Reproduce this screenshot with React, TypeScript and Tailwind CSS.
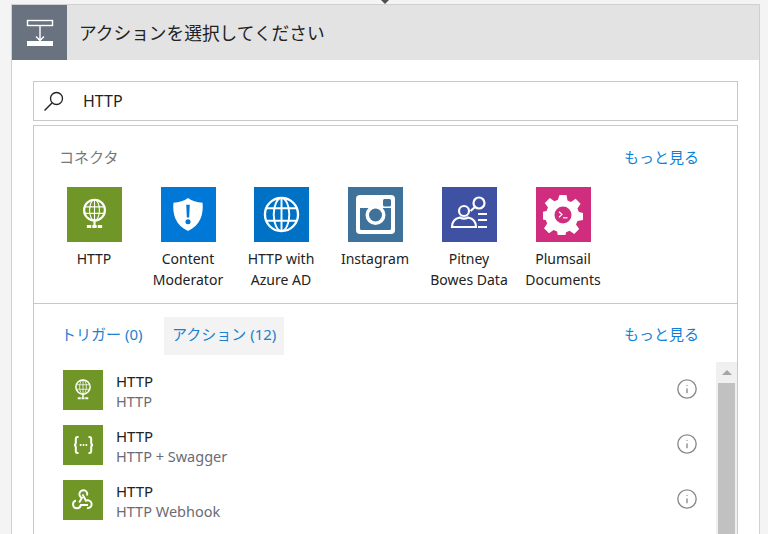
import { Info } from "lucide-react"
import type { ReactNode } from "react"

const font = { fontFamily: '"Noto Sans", "Noto Sans CJK JP", sans-serif' }

function GlobeIcon({ size }: { size: number }) {
  return (
    <svg width={size} height={size} viewBox="0 0 32 32" fill="none" stroke="#fff" strokeWidth="1.6">
      <circle cx="16" cy="12" r="9.5" strokeWidth="2" />
      <ellipse cx="16" cy="12" rx="4.5" ry="9.5" strokeWidth="1" />
      <path d="M7 9h18M7 15h18M16 2.500v19" strokeWidth="1" />
      <path d="M16 22v4" strokeWidth="2" />
      <path d="M9 27h14" strokeWidth="2.800" strokeDasharray="4 1" />
    </svg>
  )
}

function ShieldIcon() {
  return (
    <svg width="32" height="35" viewBox="0 0 32 36">
      <path d="M16 1c4 3 9 4.500 15 5 1 12-2 23-15 29C3 29 0 18 1 6c6-.5 11-2 15-5z" fill="#fff" />
      <path d="M14.200 8h3.600l-.6 13h-2.400z" fill="#0078d7" />
      <circle cx="16" cy="25.500" r="2.600" fill="#0078d7" />
    </svg>
  )
}

function WideGlobeIcon() {
  return (
    <svg width="37" height="37" viewBox="0 0 38 38" fill="none" stroke="#fff" strokeWidth="2">
      <circle cx="19" cy="19" r="17" strokeWidth="2.400" />
      <ellipse cx="19" cy="19" rx="8" ry="17" />
      <path d="M19 2v34M4 12.500h30M4 25.500h30" />
    </svg>
  )
}

function InstagramIcon() {
  return (
    <svg width="39" height="39" viewBox="0 0 39 39">
      <rect x="0" y="0" width="39" height="39" rx="4" fill="#fff" />
      <path d="M4 13h8.400a10 10 0 1 0 14.200 0H35v20.500a1.500 1.500 0 0 1-1.500 1.500h-28A1.500 1.500 0 0 1 4 33.500z" fill="#3f729b" />
      <circle cx="19.500" cy="20" r="6.500" fill="#3f729b" />
      <rect x="27" y="4" width="8" height="7.500" rx="1.500" fill="#3f729b" />
    </svg>
  )
}

function PitneyIcon() {
  return (
    <svg width="55" height="55" viewBox="0 0 55 55" fill="none" stroke="#fff" strokeWidth="2.200">
      <circle cx="22" cy="24" r="5" />
      <path d="M10 40c0-5.500 3-8.500 8-9.500 2.500 1.500 5.500 1.500 8 0 5 1 8 4 8 9.500z" />
      <circle cx="37" cy="16" r="5.500" />
      <path d="M33 20l-4.500 4" />
      <path d="M36 27h9M36 33h9M36 40h9" />
    </svg>
  )
}

function GearIcon() {
  return (
    <svg width="40" height="40" viewBox="0 0 40 40">
      <path
        fill="#fff"
        d="M16.500 0h7l1 5.500 3.500 1.500 4.600-3.200 5 5-3.200 4.600 1.500 3.500 4.100 1v7l-5.500 1-1.500 3.500 3.200 4.600-5 5-4.600-3.200-3.500 1.500-1 4.700h-7l-1-5.500-3.500-1.500-4.600 3.200-5-5 3.200-4.600-1.500-3.500-4.700-1v-7l5.500-1 1.500-3.500-3.200-4.600 5-5 4.600 3.200 3.500-1.500z"
      />
      <circle cx="20" cy="20" r="8.500" fill="#d12d7e" />
      <path d="M16 16.800l3 2.700-3 2.700" fill="none" stroke="#fff" strokeWidth="1.200" />
      <path d="M20 22.800h4.500" stroke="#fff" strokeWidth="1.200" />
    </svg>
  )
}

function BracesIcon() {
  return (
    <svg width="21" height="18" viewBox="0 0 21 18" fill="none" stroke="#fff" strokeWidth="2">
      <path d="M5.500 1H4.500C3.200 1 2.800 2 2.800 3v3.500C2.800 8 2 9 1 9c1 0 1.800 1 1.800 2.500V15c0 1 .4 2 1.700 2h1" />
      <path d="M15.500 1h1c1.300 0 1.700 1 1.700 2v3.500c0 1.500.8 2.500 1.800 2.500-1 0-1.800 1-1.800 2.500V15c0 1-.4 2-1.700 2h-1" />
      <path d="M6.800 9h1.600M9.700 9h1.600M12.600 9h1.600" />
    </svg>
  )
}

function WebhookIcon() {
  return (
    <svg width="22" height="22" viewBox="0 0 22 22" fill="none" stroke="#fff" strokeWidth="1.900">
      <path d="M7.200 13.500L10 8.800A3.900 3.900 0 1 1 15 6.500" />
      <path d="M10.500 5.500l3.500 6.200a3.900 3.900 0 1 1 1 7.300" />
      <path d="M16 16H8.800A3.900 3.900 0 1 1 4 11.600" />
    </svg>
  )
}

type Connector = { name: ReactNode; color: string; icon: ReactNode; offset?: string }

const connectors: Connector[] = [
  { name: "HTTP", color: "bg-[#6f9626]", icon: <GlobeIcon size={35} /> },
  { name: <>Content<br />Moderator</>, color: "bg-[#0078d7]", icon: <ShieldIcon /> },
  { name: <>HTTP with<br />Azure AD</>, color: "bg-[#0072c6]", icon: <WideGlobeIcon />, offset: "-ml-[1px]" },
  { name: "Instagram", color: "bg-[#3f729b]", icon: <InstagramIcon /> },
  { name: <>Pitney<br />Bowes Data</>, color: "bg-[#3f51a3]", icon: <PitneyIcon /> },
  { name: <>Plumsail<br />Documents</>, color: "bg-[#d12d7e]", icon: <GearIcon /> },
]

const actions = [
  { sub: "HTTP", icon: <GlobeIcon size={24} /> },
  { sub: "HTTP + Swagger", icon: <BracesIcon /> },
  { sub: "HTTP Webhook", icon: <WebhookIcon /> },
]

export default function App() {
  return (
    <div className="relative h-[534px] w-[768px] overflow-hidden bg-[#f4f4f4] pl-[11px] pr-[8px] pt-1" style={font}>
      <div className="absolute left-[381px] top-0 h-0 w-0 border-x-[4px] border-t-[4px] border-x-transparent border-t-[#505050]" />
      <div className="h-[560px] border border-[#d0d0d0] bg-white">
        <div className="flex h-[55px] items-center bg-[#e3e3e3]">
          <div className="flex h-[55px] w-[55px] items-center justify-center bg-[#68737f]">
            <svg width="28" height="28" viewBox="0 0 28 28" fill="none" stroke="#fff">
              <rect x="1.500" y="1.500" width="25" height="5" strokeWidth="1.400" />
              <path d="M14 7v14M10 17.500l4 4 4-4" strokeWidth="1.400" />
              <rect x="1" y="22" width="26" height="5" fill="#fff" stroke="none" />
            </svg>
          </div>
          <h1 className="ml-3 pt-[1px] text-[17.700px] text-[#222]">アクションを選択してください</h1>
        </div>

        <div className="px-[21px] pt-[21px]">
          <div className="flex h-[40px] items-center border border-[#c8c8c8] pl-[9px]">
            <svg width="22" height="22" viewBox="0 0 22 22" fill="none" stroke="#222">
              <circle cx="13.500" cy="8.500" r="6" strokeWidth="1.300" />
              <path d="M9 13L1.500 20.500" strokeWidth="1.500" />
            </svg>
            <span className="ml-[18px] text-base leading-none text-[#222]">HTTP</span>
          </div>

          <div className="mt-1 border border-[#c8c8c8]">
            <div className="h-[178px] border-b border-[#c8c8c8] px-[25px] pt-[19px]">
              <div className="flex items-center justify-between pr-[13px]">
                <span className="text-[15px] leading-[24px] text-[#777]">コネクタ</span>
                <a className="text-[15px] leading-[24px] text-[#0f7fd8]">もっと見る</a>
              </div>
              <div className="mt-[18px] -ml-[12px] flex">
                {connectors.map((c, i) => (
                  <div key={i} className={`flex w-[94px] flex-col items-center ${c.offset ?? ""}`}>
                    <div className={`flex h-[55px] w-[55px] items-center justify-center ${c.color}`}>{c.icon}</div>
                    <div className="mt-[6px] whitespace-nowrap text-center text-[14px] leading-[21px] text-[#222]">
                      {c.name}
                    </div>
                  </div>
                ))}
              </div>
            </div>

            <div className="flex h-[58px] items-center pl-[21px] pr-[38px] pt-[6px]">
              <a className="mb-[4px] px-[6px] text-[15px] text-[#1c7fd0]">トリガー (0)</a>
              <a className="ml-[16px] flex h-[38px] items-center bg-[#f3f3f3] px-[7.500px] pb-[4px] text-[15px] text-[#1c7fd0]">
                アクション (12)
              </a>
              <a className="mb-[4px] ml-auto text-[15px] text-[#0f7fd8]">もっと見る</a>
            </div>

            <div className="flex">
              <div className="flex-1 pl-[29px] pt-[8px]">
                {actions.map((a, i) => (
                  <div key={i} className="mb-[15px] flex h-[40px] items-center">
                    <div className="flex h-[40px] w-[40px] items-center justify-center bg-[#6f9626]">{a.icon}</div>
                    <div className="ml-[13px] flex-1 pt-[2px]">
                      <div className="text-[15px] leading-[20px] text-[#222]">HTTP</div>
                      <div className="text-[14.500px] leading-[20px] text-[#6b6b75]">{a.sub}</div>
                    </div>
                    <Info size={22} strokeWidth={1.500} className="mb-[2px] mr-[18px] text-[#8a8a8a]" />
                  </div>
                ))}
              </div>
              <div className="flex h-[200px] w-[21px] flex-col items-center bg-[#f0f0f0]">
                <div className="mt-[8px] h-0 w-0 border-x-[5px] border-b-[5px] border-x-transparent border-b-[#a6a6a6]" />
                <div className="mt-[8px] w-[17px] flex-1 bg-[#c1c1c1]" />
              </div>
            </div>
          </div>
        </div>
      </div>
    </div>
  )
}
